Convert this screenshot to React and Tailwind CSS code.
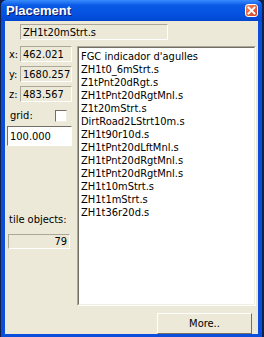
import React from "react";

const items = [
  "FGC indicador d'agulles",
  "ZH1t0_6mStrt.s",
  "Z1tPnt20dRgt.s",
  "ZH1tPnt20dRgtMnl.s",
  "Z1t20mStrt.s",
  "DirtRoad2LStrt10m.s",
  "ZH1t90r10d.s",
  "ZH1tPnt20dLftMnl.s",
  "ZH1tPnt20dRgtMnl.s",
  "ZH1tPnt20dRgtMnl.s",
  "ZH1t10mStrt.s",
  "ZH1t1mStrt.s",
  "ZH1t36r20d.s",
];

function RO({ className, children, right }) {
  return (
    <div
      className={`border border-t-[#aca899] border-l-[#aca899] border-b-white border-r-white bg-[#ece9d8] flex items-center ${right ? "justify-end pr-[2px]" : "pl-[2px]"} ${className}`}
    >
      {children}
    </div>
  );
}

export default function App() {
  return (
    <div
      className="w-[264px] h-[337px] bg-[#10204a] overflow-hidden pl-[1px]"
      style={{ fontFamily: '"DejaVu Sans Condensed", "DejaVu Sans", sans-serif' }}
    >
      <div className="w-[261px] h-[337px] flex flex-col bg-[#0a4fdc] rounded-t-[6px]">
        {/* title bar */}
        <div className="h-[21px] shrink-0 flex items-center justify-between pl-[5px] pr-[4px] rounded-t-[6px] bg-[linear-gradient(to_bottom,#3a8cff_0%,#0a5ae6_25%,#0450e0_70%,#0046d0_100%)]">
          <span
            className="text-white font-bold text-[13px] leading-none [text-shadow:1px_1px_0_#0a1a6a]"
            style={{ fontFamily: '"Liberation Sans", Arial, sans-serif' }}
          >
            Placement
          </span>
          <div className="w-[13px] h-[13px] rounded-[3px] border border-white bg-[linear-gradient(135deg,#f08a60,#d8401a)] flex items-center justify-center">
            <svg width="9" height="9" viewBox="0 0 9 9">
              <path d="M1.5 1.5 L7.5 7.5 M7.5 1.5 L1.5 7.5" stroke="white" strokeWidth="1.8" strokeLinecap="square" />
            </svg>
          </div>
        </div>
        {/* content */}
        <div className="mx-[4px] mb-[3px] flex-1 bg-[#ece9d8] flex flex-col text-[11px] font-stretch-condensed text-black leading-none">
          <RO className="ml-[15px] mt-[3px] w-[148px] h-[16px]">ZH1t20mStrt.s</RO>
          <div className="flex mt-[6px]">
            {/* left column */}
            <div className="w-[72px] shrink-0 flex flex-col">
              <div className="flex items-center h-[16px]">
                <span className="w-[15px] pl-[4px]">x:</span>
                <RO className="w-[52px] h-[16px]">462.021</RO>
              </div>
              <div className="flex items-center mt-[4px] h-[16px]">
                <span className="w-[15px] pl-[4px]">y:</span>
                <RO className="w-[52px] h-[16px]">1680.257</RO>
              </div>
              <div className="flex items-center mt-[4px] h-[16px]">
                <span className="w-[15px] pl-[4px]">z:</span>
                <RO className="w-[52px] h-[16px]">483.567</RO>
              </div>
              <div className="flex items-center mt-[8px] h-[11px]">
                <span className="pl-[5px] w-[50px]">grid:</span>
                <div className="w-[12px] h-[12px] bg-white border border-t-[#716f64] border-l-[#716f64] border-b-[#f1efe2] border-r-[#f1efe2]" />
              </div>
              <div className="ml-[2px] mt-[5px] w-[65px] h-[20px] bg-white border border-t-[#716f64] border-l-[#716f64] border-b-white border-r-white flex items-center pl-[2px]">
                100.000
              </div>
              <div className="mt-[68px] pl-[4px]">tile objects:</div>
              <RO right className="ml-[3px] mt-[9px] w-[62px] h-[15px]">79</RO>
            </div>
            {/* list */}
            <div className="w-[179px] h-[260px] border border-t-[#aca899] border-l-[#aca899] border-b-white border-r-white">
              <div className="w-full h-full bg-white border border-t-[#716f64] border-l-[#716f64] border-b-[#f1efe2] border-r-[#f1efe2] pt-[2px] pl-[2px]">
                {items.map((t, i) => (
                  <div key={i} className="h-[13px] leading-[13px] whitespace-nowrap">
                    {t}
                  </div>
                ))}
              </div>
            </div>
          </div>
          <div className="flex justify-end pr-[6px] mt-[7px]">
            <div className="w-[95px] h-[21px] border border-t-white border-l-white border-b-[#716f64] border-r-[#716f64] bg-[#ece9d8] flex items-center justify-center">
              More..
            </div>
          </div>
        </div>
      </div>
    </div>
  );
}
